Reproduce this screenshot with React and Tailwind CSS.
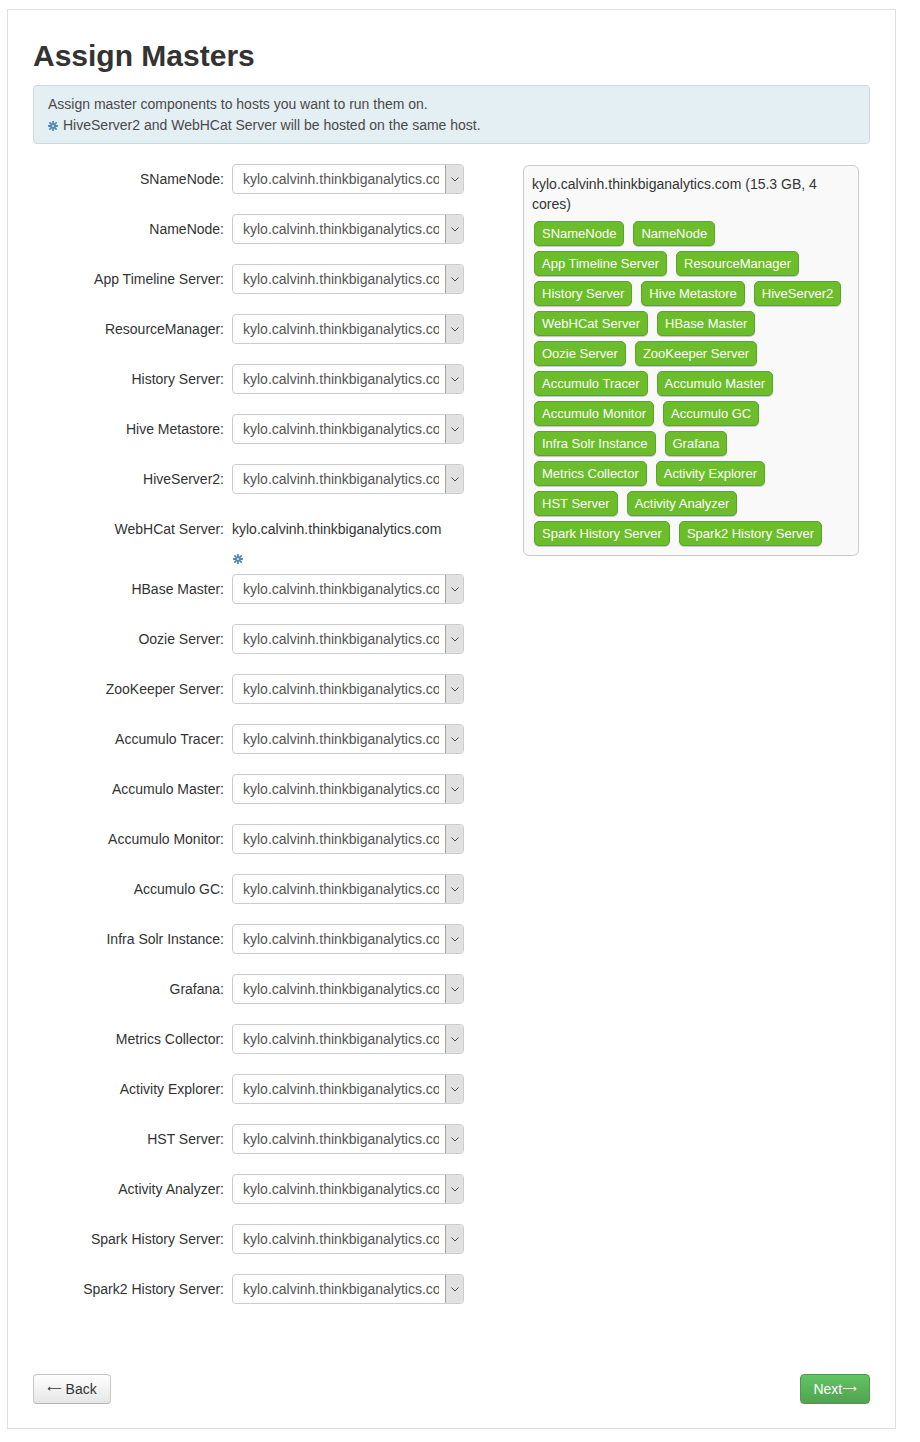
import React from "react";

const HOST = "kylo.calvinh.thinkbiganalytics.com";

const rows = [
  "SNameNode",
  "NameNode",
  "App Timeline Server",
  "ResourceManager",
  "History Server",
  "Hive Metastore",
  "HiveServer2",
  "WebHCat Server",
  "HBase Master",
  "Oozie Server",
  "ZooKeeper Server",
  "Accumulo Tracer",
  "Accumulo Master",
  "Accumulo Monitor",
  "Accumulo GC",
  "Infra Solr Instance",
  "Grafana",
  "Metrics Collector",
  "Activity Explorer",
  "HST Server",
  "Activity Analyzer",
  "Spark History Server",
  "Spark2 History Server",
];

const badgeRows = [
  ["SNameNode", "NameNode"],
  ["App Timeline Server", "ResourceManager"],
  ["History Server", "Hive Metastore", "HiveServer2"],
  ["WebHCat Server", "HBase Master"],
  ["Oozie Server", "ZooKeeper Server"],
  ["Accumulo Tracer", "Accumulo Master"],
  ["Accumulo Monitor", "Accumulo GC"],
  ["Infra Solr Instance", "Grafana"],
  ["Metrics Collector", "Activity Explorer"],
  ["HST Server", "Activity Analyzer"],
  ["Spark History Server", "Spark2 History Server"],
];

function Star() {
  const spokes = [0, 45, 90, 135];
  return (
    <svg width="10" height="10" viewBox="0 0 10 10" className="inline-block">
      {spokes.map((a) => (
        <line
          key={a}
          x1="5"
          y1="0.6"
          x2="5"
          y2="9.4"
          stroke="#4f88b8"
          strokeWidth="1.8"
          strokeLinecap="round"
          transform={`rotate(${a} 5 5)`}
        />
      ))}
      <circle cx="5" cy="5" r="1.1" fill="#dcebf3" />
    </svg>
  );
}

function Select() {
  return (
    <div className="flex w-[232px] h-[30px] border border-[#cccccc] rounded-[4px] bg-white overflow-hidden">
      <div className="flex-1 min-w-0 pl-[10px] pr-[6px]">
        <div className="overflow-hidden whitespace-nowrap leading-[28px] text-[#555555]">{HOST}</div>
      </div>
      <div className="w-[18px] shrink-0 bg-[#e1e1e1] border-l border-[#a6a6a6] flex items-center justify-center">
        <svg width="8" height="5" viewBox="0 0 8 5">
          <path d="M0.5 0.5 L4 4 L7.5 0.5" fill="none" stroke="#4a4a4a" strokeWidth="1" />
        </svg>
      </div>
    </div>
  );
}

function Badge({ children }) {
  return (
    <span className="inline-flex items-center h-[25px] px-[7px] rounded-[5px] border border-[#5da522] bg-[#6cbd2b] text-white text-[13px] leading-[23px] shadow-[0_1px_0_#c8c8c8]">
      {children}
    </span>
  );
}

export default function App() {
  return (
    <div className="bg-white min-h-[1442px] pt-[9px] pl-[7px] w-[920px] font-['Liberation_Sans',Arial,sans-serif] text-[14px] text-[#333333]">
      <div className="w-[889px] border border-[#e0e0e0] pt-[29px] pb-[24px] px-[25px]">
        <h1 className="text-[30px] font-bold leading-[33px] text-[#333333]">Assign Masters</h1>
        <div className="mt-[13px] border border-[#c6dbe5] bg-[#e4eff4] rounded-[4px] pl-[14px] pt-[8px] pb-[7px] leading-[21px] text-[#4a4a4a]">
          <div>Assign master components to hosts you want to run them on.</div>
          <div className="flex items-center gap-[5px]">
            <Star />
            <span>HiveServer2 and WebHCat Server will be hosted on the same host.</span>
          </div>
        </div>

        <div className="flex mt-[20px]">
          <div className="w-[490px]">
            {rows.map((r) =>
              r === "WebHCat Server" ? (
                <div key={r} className="flex">
                  <div className="w-[191px] h-[30px] flex items-center justify-end">{r}:</div>
                  <div className="ml-[8px]">
                    <div className="h-[30px] flex items-center">{HOST}</div>
                    <div className="h-[30px] flex items-center pl-[1px]">
                      <Star />
                    </div>
                  </div>
                </div>
              ) : (
                <div key={r} className="flex mb-[20px]">
                  <div className="w-[191px] h-[30px] flex items-center justify-end whitespace-nowrap">{r}:</div>
                  <div className="ml-[8px]">
                    <Select />
                  </div>
                </div>
              )
            )}
          </div>
          <div className="w-[336px] self-start mt-[1px]">
            <div className="border border-[#cccccc] rounded-[6px] bg-[#f9f9f9] pt-[8px] pb-[9px] px-[8px]">
              <div className="leading-[20px] text-[#333333]">{HOST} (15.3 GB, 4 cores)</div>
              <div className="mt-[7px] pl-[2px] flex flex-col gap-[5px]">
                {badgeRows.map((br, i) => (
                  <div key={i} className="flex gap-[9px]">
                    {br.map((b) => (
                      <Badge key={b}>{b}</Badge>
                    ))}
                  </div>
                ))}
              </div>
            </div>
          </div>
        </div>

        <div className="flex justify-between mt-[50px]">
          <button className="h-[30px] w-[78px] rounded-[4px] border border-[#c5c5c5] border-b-[#b3b3b3] bg-gradient-to-b from-white to-[#e6e6e6] text-[#333333] text-[14px] flex items-center justify-center gap-[4px]">
            <span className="font-['DejaVu_Sans',sans-serif] text-[10px] leading-none">⟵</span>
            <span>Back</span>
          </button>
          <button className="h-[30px] w-[70px] rounded-[4px] border border-[#4c9a4c] bg-gradient-to-b from-[#62c462] to-[#51a351] text-white text-[14px] flex items-center justify-center">
            <span>Next</span>
            <span className="font-['DejaVu_Sans',sans-serif] text-[10px] leading-none">⟶</span>
          </button>
        </div>
      </div>
    </div>
  );
}
